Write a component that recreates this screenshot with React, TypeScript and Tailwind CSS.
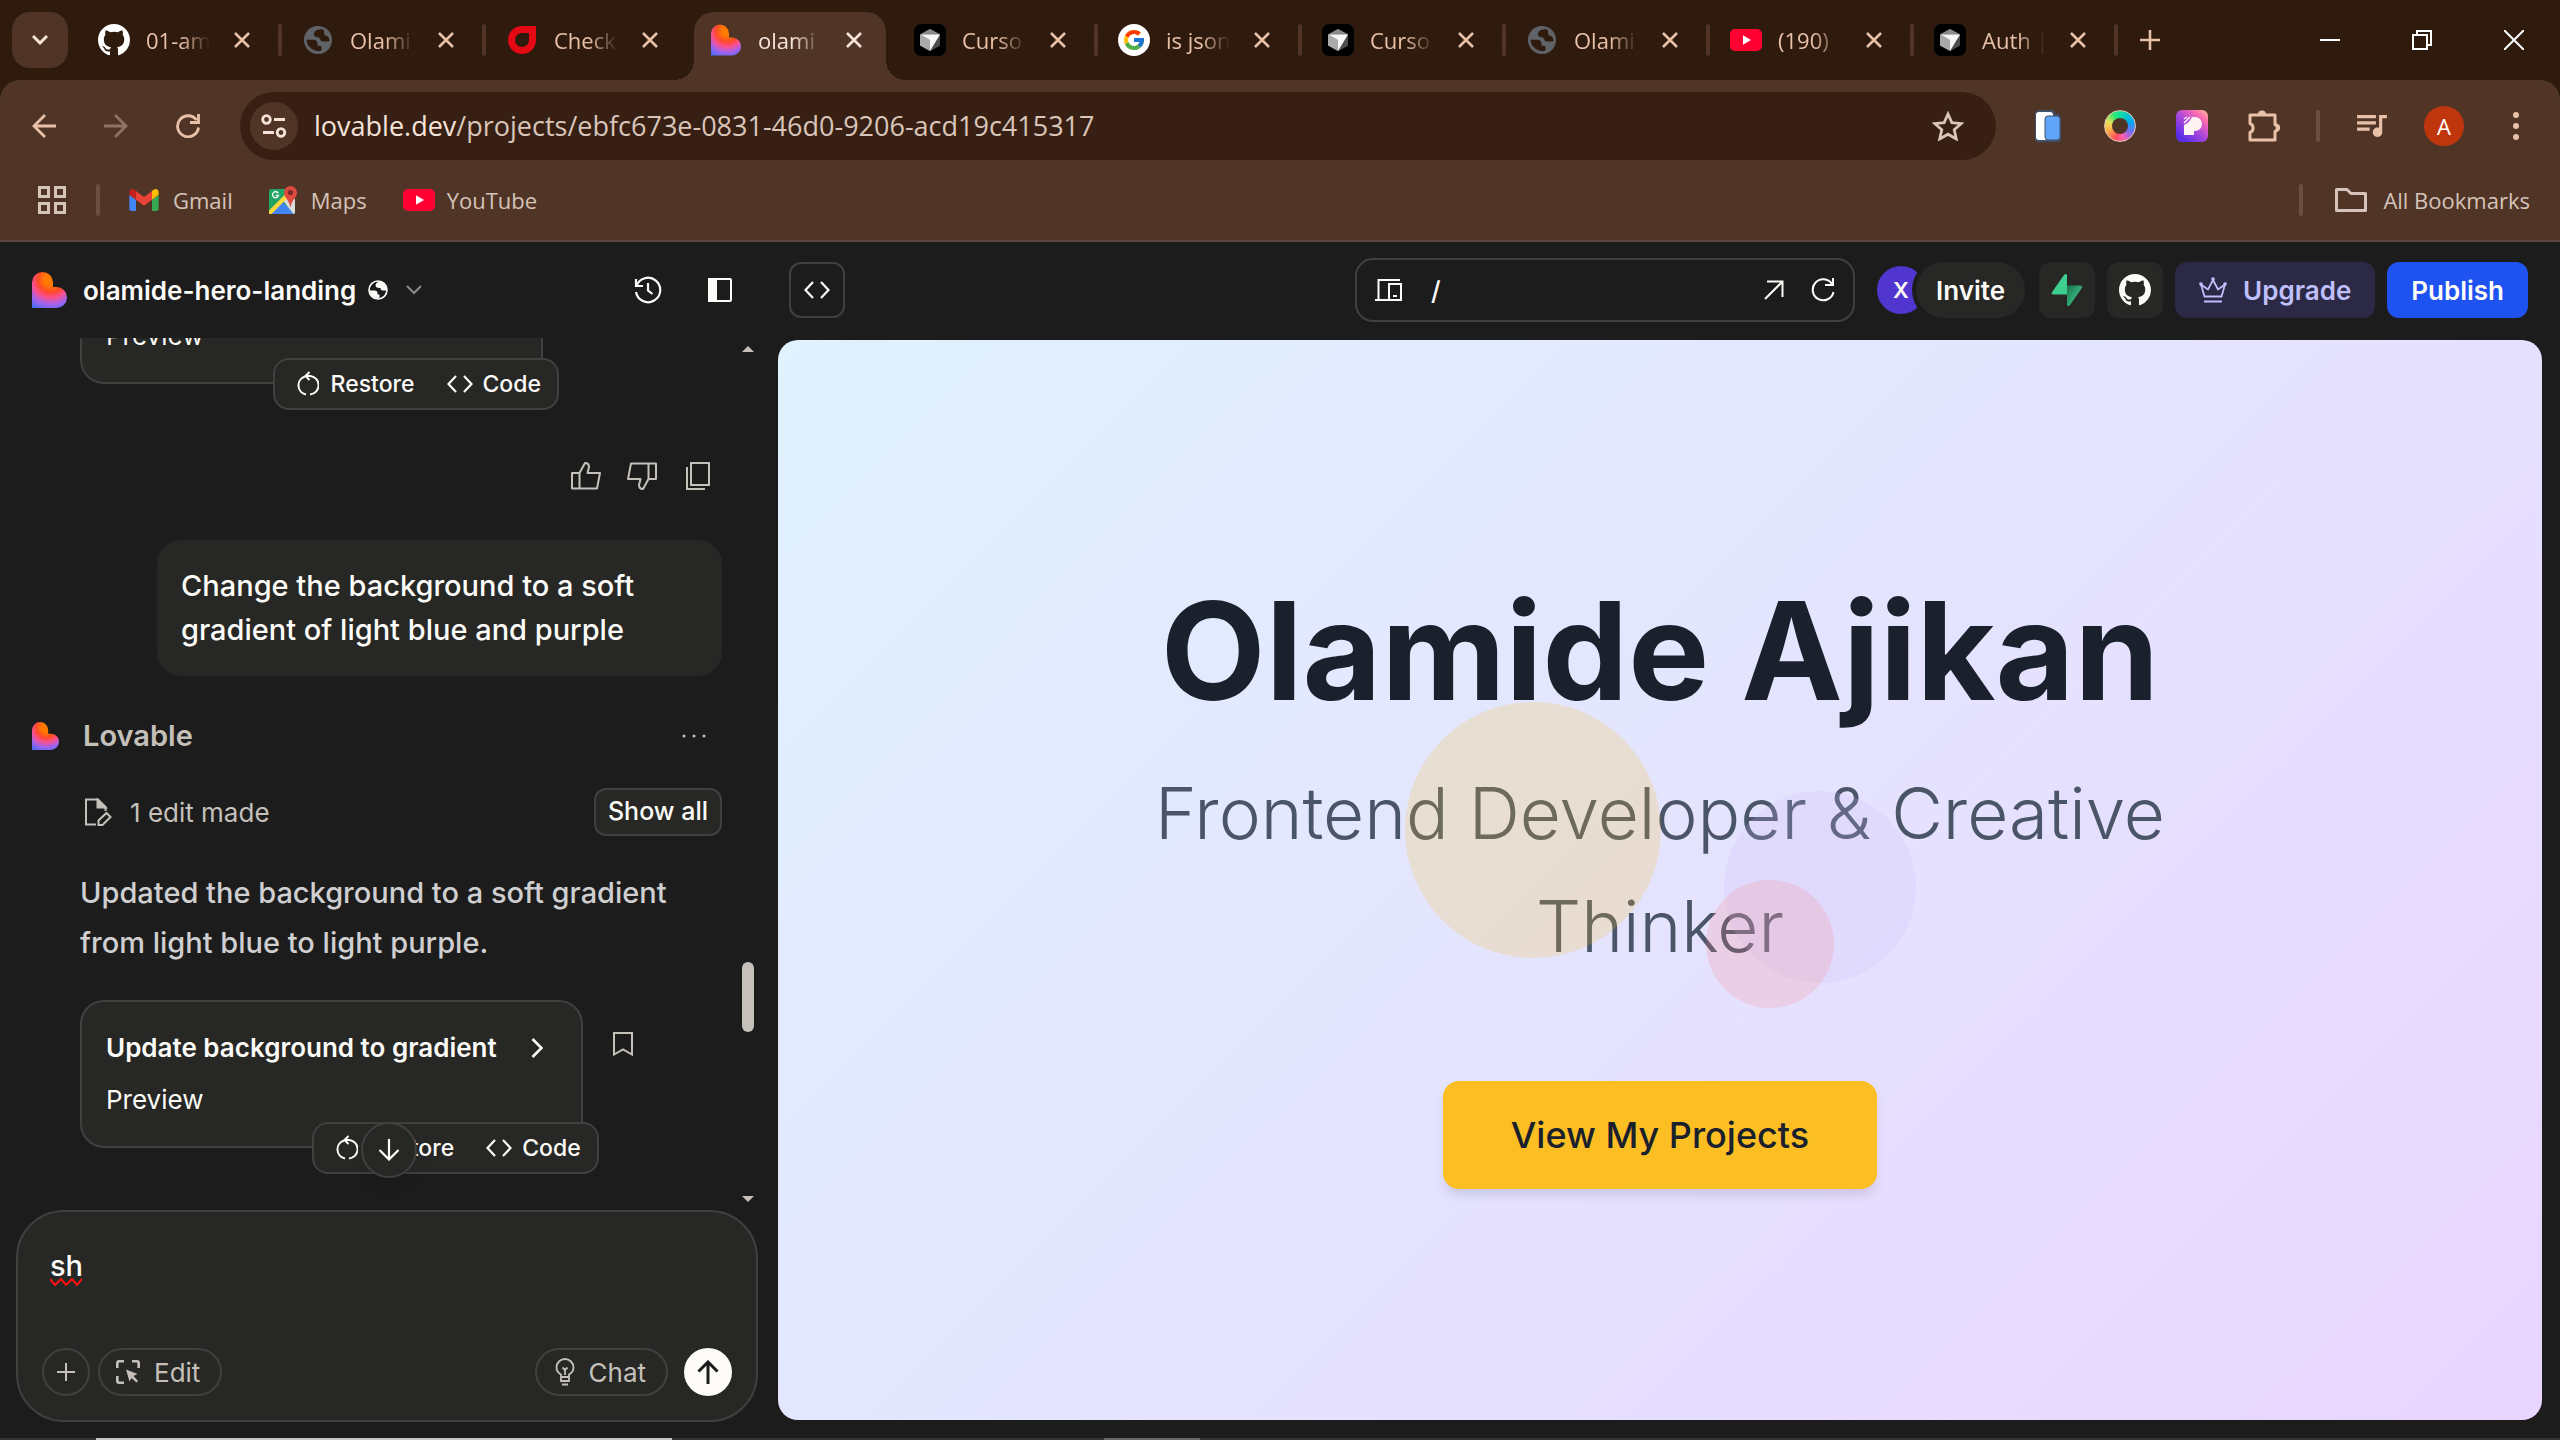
import React, { type ReactNode } from "react";
import { FcGoogle } from "react-icons/fc";

type IconProps = { className?: string };

function GithubMark({ className }: IconProps) {
  return (
    <svg viewBox="0 0 16 16" fill="currentColor" className={className} aria-hidden="true">
      <path d="M8 0C3.58 0 0 3.58 0 8c0 3.54 2.29 6.53 5.47 7.59.4.07.55-.17.55-.38 0-.19-.01-.82-.01-1.49-2.01.37-2.53-.49-2.69-.94-.09-.23-.48-.94-.82-1.13-.28-.15-.68-.52-.01-.53.63-.01 1.08.58 1.23.82.72 1.21 1.87.87 2.33.66.07-.52.28-.87.51-1.07-1.78-.2-3.64-.89-3.64-3.95 0-.87.31-1.59.82-2.15-.08-.2-.36-1.02.08-2.12 0 0 .67-.21 2.2.82.64-.18 1.32-.27 2-.27.68 0 1.36.09 2 .27 1.53-1.04 2.2-.82 2.2-.82.44 1.1.16 1.92.08 2.12.51.56.82 1.27.82 2.15 0 3.07-1.87 3.75-3.65 3.95.29.25.54.73.54 1.48 0 1.07-.01 1.93-.01 2.2 0 .21.15.46.55.38A8.013 8.013 0 0 0 16 8c0-4.42-3.58-8-8-8z" />
    </svg>
  );
}

function LovableMark({ className, id }: IconProps & { id: string }) {
  return (
    <svg viewBox="0 0 35 36" className={className} aria-hidden="true">
      <defs>
        <radialGradient id={id} gradientUnits="userSpaceOnUse" cx="19" cy="7" r="33">
          <stop offset="0.2" stopColor="#ff7a00" />
          <stop offset="0.4" stopColor="#ff4a2b" />
          <stop offset="0.57" stopColor="#f9508f" />
          <stop offset="0.76" stopColor="#a862ea" />
          <stop offset="1" stopColor="#4a6cf5" />
        </radialGradient>
      </defs>
      <path d="M0 36V10.500a10.500 10.500 0 0 1 21 0V15h3.500a10.500 10.500 0 0 1 0 21Z" fill={`url(#${id})`} />
    </svg>
  );
}

function GlobeFavicon({ className }: IconProps) {
  return (
    <svg viewBox="0 0 28 28" className={className} aria-hidden="true">
      <circle cx="14" cy="14" r="14" fill="#5f6368" />
      <path d="M2.600 13.800H9q4.500 0 4.500 4.200v1.800h2.500q1.500 0 1.500 1.800v3q-5 1.800-9.500-1.500Q2.600 19.500 2.600 13.800Z" fill="#2e1b0e" />
      <path d="M10 7.500q.3-2.500 3-3.500 3.800-1.700 7 0v2.500q0 3 2.800 3.500 2.400.7 2.600 4.500-.8 1.500-2.400 1h-3.500q-3 0-3.500-2.500-.6-2-3-2Q10 11 10 7.500Z" fill="#2e1b0e" />
    </svg>
  );
}

function CheckFavicon({ className }: IconProps) {
  return (
    <svg viewBox="0 0 28 28" className={className} aria-hidden="true">
      <path
        d="M14 0h14v14a14 14 0 1 1-14-14Zm0 7a7 7 0 1 0 7 7V7Z"
        fill="#e50914"
        fillRule="evenodd"
      />
    </svg>
  );
}

function CursorFavicon({ className }: IconProps) {
  return (
    <svg viewBox="0 0 32 32" className={className} aria-hidden="true">
      <rect width="32" height="32" rx="7" fill="#000" />
      <path d="M16 5l10 5.500v11L16 27 6 21.500v-11Z" fill="#6b6b6b" />
      <path d="M16 5l10 5.500H6Z" fill="#8b8b8b" />
      <path d="M6 10.500l10 5.500v11L6 21.500Z" fill="#a9a9a9" />
      <path d="M26 10.500v11L16 27Z" fill="#4c4c4c" />
      <path d="M6.500 10.500h19.500L16 27V16Z" fill="#f7f7f7" />
    </svg>
  );
}

function GoogleFavicon() {
  return (
    <span className="flex size-8 items-center justify-center rounded-full bg-white">
      <FcGoogle className="size-6" />
    </span>
  );
}

function YouTubeMark({ className }: IconProps) {
  return (
    <svg viewBox="0 0 32 22" className={className} aria-hidden="true">
      <rect width="32" height="22" rx="5" fill="#ff0033" />
      <path d="M13 6.200v9.600l8-4.800Z" fill="#fff" />
    </svg>
  );
}

function GmailMark({ className }: IconProps) {
  return (
    <svg viewBox="52 42 88 66" className={className} aria-hidden="true">
      <path fill="#4285f4" d="M58 108h14V74L52 59v43c0 3.320 2.690 6 6 6" />
      <path fill="#34a853" d="M120 108h14c3.320 0 6-2.690 6-6V59l-20 15" />
      <path fill="#fbbc04" d="M120 48v26l20-15v-8c0-7.420-8.470-11.650-14.400-7.200" />
      <path fill="#ea4335" d="M72 74V48l24 18 24-18v26L96 92" />
      <path fill="#c5221f" d="M52 51v8l20 15V48l-5.600-4.200c-5.940-4.450-14.400-.22-14.400 7.200" />
    </svg>
  );
}

function MapsMark({ className }: IconProps) {
  return (
    <svg viewBox="0 0 28 28" className={className} aria-hidden="true">
      <rect y="3" width="26" height="25" rx="2" fill="#1fa463" />
      <path d="M13 15.500L25.500 28H1Z" fill="#4285f4" />
      <path d="M14 14.500l6-6 6 5V26q0 2-1.500 2Z" fill="#dcdcdc" />
      <path d="M0 24.500L18.500 6l3 3L2.500 28H1q-1 0-1-1Z" fill="#fdd73b" />
      <path d="M21.500 0a6.500 6.500 0 0 1 6.500 6.500c0 5-4.700 6.500-6.500 15-1.800-8.500-6.500-10-6.500-15A6.500 6.500 0 0 1 21.500 0Z" fill="#dd4b3e" />
      <circle cx="21.500" cy="6.500" r="2.600" fill="#7d2a22" />
      <path d="M9.200 7.300a3 3 0 1 0 .3 2H6.700" fill="none" stroke="#fff" strokeWidth="1.300" />
    </svg>
  );
}

function CodeIcon({ className }: IconProps) {
  return (
    <svg viewBox="0 0 26 20" fill="none" stroke="currentColor" strokeWidth="2.200" className={className} aria-hidden="true">
      <path d="M9 2L1.500 10 9 18M17 2l7.500 8L17 18" />
    </svg>
  );
}

function RestoreIcon({ className }: IconProps) {
  return (
    <svg viewBox="0 0 22 26" fill="none" stroke="currentColor" strokeWidth="2" className={className} aria-hidden="true">
      <path d="M8 5.500A9.300 9.300 0 0 0 9 23.500M13 23.500A9.300 9.300 0 0 0 13.500 5H9" />
      <path d="M12.500 1L8.500 5l4 4" />
    </svg>
  );
}

function ThumbIcon({ className }: IconProps) {
  return (
    <svg viewBox="0 0 32 30" fill="none" stroke="currentColor" strokeWidth="2" strokeLinejoin="round" className={className} aria-hidden="true">
      <path d="M2 12h7.500L15 2q4 0 4 4l-1.500 6H30l-3 15.500H2ZM9.500 12v15.500" />
    </svg>
  );
}

function ChromeBtn({ label, className, children }: { label: string; className?: string; children: ReactNode }) {
  return (
    <button type="button" aria-label={label} className={`flex shrink-0 items-center justify-center ${className ?? ""}`}>
      {children}
    </button>
  );
}

function CloseX({ className }: IconProps) {
  return (
    <svg viewBox="0 0 16 16" stroke="currentColor" strokeWidth="2.600" className={className} aria-hidden="true">
      <path d="M1 1l14 14M15 1L1 15" />
    </svg>
  );
}

type TabData = { title: string; icon: ReactNode; active?: boolean; separator?: boolean };

const tabs: TabData[] = [
  { title: "01-am", icon: <GithubMark className="size-8 text-white" />, separator: true },
  { title: "Olami", icon: <GlobeFavicon className="size-7" />, separator: true },
  { title: "Check", icon: <CheckFavicon className="size-7" /> },
  { title: "olami", icon: <LovableMark id="tab-logo" className="h-8 w-[30px]" />, active: true },
  { title: "Curso", icon: <CursorFavicon className="size-8" />, separator: true },
  { title: "is json", icon: <GoogleFavicon />, separator: true },
  { title: "Curso", icon: <CursorFavicon className="size-8" />, separator: true },
  { title: "Olami", icon: <GlobeFavicon className="size-7" />, separator: true },
  { title: "(190)", icon: <YouTubeMark className="h-[22px] w-8" />, separator: true },
  { title: "Auth |", icon: <CursorFavicon className="size-8" />, separator: true },
];

function Tab({ title, icon, active, separator }: TabData) {
  return (
    <div className="relative flex w-[204px] shrink-0 items-center pl-5">
      {active && (
        <div className="absolute inset-y-0 -left-4 right-0 pt-3">
          <div className="mr-2 ml-5 h-full rounded-t-[20px] bg-[#503526]" />
          <div className="absolute bottom-0 left-0 size-5 bg-[radial-gradient(circle_at_0_0,#2e1b0e_20px,#503526_20px)]" />
          <div className="absolute -right-3 bottom-0 size-5 bg-[radial-gradient(circle_at_100%_0,#2e1b0e_20px,#503526_20px)]" />
        </div>
      )}
      <div className="relative flex w-8 justify-center">{icon}</div>
      <span
        className={`relative ml-4 w-16 overflow-hidden text-[22px] leading-8 whitespace-nowrap [mask-image:linear-gradient(to_right,#000_55%,transparent)] ${
          active ? "text-[#f6e3da]" : "text-[#e9c1a9]"
        }`}
      >
        {title}
      </span>
      <ChromeBtn label={`Close ${title}`} className={`relative ml-5 size-6 ${active ? "text-[#f6e3da]" : "text-[#e9c1a9]"}`}>
        <CloseX className="size-4" />
      </ChromeBtn>
      {separator && <div className="ml-auto h-8 w-1 rounded-full bg-[#503526]" />}
    </div>
  );
}

function TabStrip() {
  return (
    <div className="flex h-20 bg-[#2e1b0e]">
      <ChromeBtn label="Search tabs" className="mt-3 mr-[10px] ml-3 size-14 rounded-[18px] bg-[#503526] text-[#f6e3da]">
        <svg viewBox="0 0 16 10" fill="none" stroke="currentColor" strokeWidth="3" className="h-[10px] w-4">
          <path d="M1 1l7 7 7-7" />
        </svg>
      </ChromeBtn>
      {tabs.map((t, i) => (
        <Tab key={i} {...t} />
      ))}
      <ChromeBtn label="New tab" className="ml-[14px] w-9 text-[#e9c1a9]">
        <svg viewBox="0 0 20 20" stroke="currentColor" strokeWidth="2.600" className="size-5">
          <path d="M10 0v20M0 10h20" />
        </svg>
      </ChromeBtn>
      <div className="ml-auto flex text-white">
        <ChromeBtn label="Minimize" className="w-[92px]">
          <svg viewBox="0 0 20 20" stroke="currentColor" strokeWidth="2" className="size-5">
            <path d="M0 10h20" />
          </svg>
        </ChromeBtn>
        <ChromeBtn label="Restore window" className="w-[92px]">
          <svg viewBox="0 0 20 20" fill="none" stroke="currentColor" strokeWidth="2" className="size-5">
            <path d="M1 5h14v14H1ZM5 5V1h14v14h-4" />
          </svg>
        </ChromeBtn>
        <ChromeBtn label="Close window" className="w-[92px]">
          <svg viewBox="0 0 20 20" stroke="currentColor" strokeWidth="2" className="size-5">
            <path d="M0 0l20 20M20 0L0 20" />
          </svg>
        </ChromeBtn>
      </div>
    </div>
  );
}

function ArrowLeft({ className }: IconProps) {
  return (
    <svg viewBox="0 0 24 24" fill="none" stroke="currentColor" strokeWidth="2.800" className={className} aria-hidden="true">
      <path d="M24 12H2M13 1L2 12l11 11" />
    </svg>
  );
}

function Toolbar() {
  return (
    <div className="flex h-[92px] items-center text-[#e9c1a9]">
      <ChromeBtn label="Back" className="ml-5 size-12">
        <ArrowLeft className="size-6" />
      </ChromeBtn>
      <ChromeBtn label="Forward" className="ml-6 size-12 text-[#8f7262]">
        <ArrowLeft className="size-6 rotate-180" />
      </ChromeBtn>
      <ChromeBtn label="Reload" className="ml-6 size-12">
        <svg viewBox="0 0 24 24" fill="none" stroke="currentColor" strokeWidth="2.800" className="size-6">
          <path d="M20.500 6A10.500 10.500 0 1 0 22.500 13.500M22.500 0v8.500H14" />
        </svg>
      </ChromeBtn>
      <div className="ml-7 flex h-[68px] flex-1 items-center rounded-full bg-[#372013] pl-[10px]">
        <ChromeBtn label="View site information" className="size-12 rounded-full bg-[#503526] text-[#f6e3da]">
          <svg viewBox="0 0 26 24" fill="none" stroke="currentColor" strokeWidth="2.800" className="h-6 w-[26px]">
            <circle cx="5.500" cy="5.500" r="3.800" />
            <circle cx="20" cy="18.500" r="3.800" />
            <path d="M13 5.500h11M2 18.500h11" />
          </svg>
        </ChromeBtn>
        <div className="ml-4 flex-1 text-[27px] leading-9 text-[#d9c5ba]">
          <span className="text-[#f6e3da]">lovable.dev</span>/projects/ebfc673e-0831-46d0-9206-acd19c415317
        </div>
        <ChromeBtn label="Bookmark this tab" className="mr-6 size-12 text-[#d9c5ba]">
          <svg viewBox="0 0 32 30" fill="none" stroke="currentColor" strokeWidth="2.800" className="h-[30px] w-8">
            <path d="M16 3l3.900 8.700 9.400.9-7.100 6.200 2.100 9.200L16 23.200 7.700 28l2.100-9.200-7.100-6.200 9.400-.9Z" />
          </svg>
        </ChromeBtn>
      </div>
      <ChromeBtn label="Mobile simulator" className="ml-7 size-12">
        <svg viewBox="0 0 26 32" className="h-8 w-[26px]">
          <path d="M3 0h15l2 4h4l2 4v22l-2 2H2L0 30V3Z" fill="#40506b" />
          <rect x="1" y="2" width="17" height="28" rx="3" fill="#fff" />
          <rect x="10" y="6" width="15" height="24" rx="3" fill="#60a5fa" stroke="#40506b" />
        </svg>
      </ChromeBtn>
      <ChromeBtn label="Colour picker" className="ml-6 size-12">
        <span className="flex size-8 items-center justify-center rounded-full border border-[#e6c9b6] bg-[conic-gradient(#10e0a0,#00a8f5_70deg,#7a6cf0_120deg,#ff5fae_165deg,#ff4f5a_200deg,#ffb04a_250deg,#e6e05a_290deg,#30e870_330deg,#10e0a0)]">
          <span className="size-4 rounded-full bg-[#503526]" />
        </span>
      </ChromeBtn>
      <ChromeBtn label="Pesticide" className="ml-6 size-12">
        <svg viewBox="0 0 32 32" className="size-8">
          <defs>
            <linearGradient id="ext-p" x1="0.200" y1="0.900" x2="1" y2="0">
              <stop offset="0" stopColor="#5a2ee8" />
              <stop offset="0.450" stopColor="#b44ad8" />
              <stop offset="0.750" stopColor="#ff6cb0" />
              <stop offset="1" stopColor="#ffc0a0" />
            </linearGradient>
          </defs>
          <rect width="32" height="32" rx="6" fill="url(#ext-p)" />
          <path d="M8 25V15q6-3 8-8h3a7 7 0 0 1 0 14h-1v4Z" fill="#fff3f3" />
          <path d="M8 9l3-2M8 13l6-6" stroke="#fff3f3" strokeWidth="1.500" />
        </svg>
      </ChromeBtn>
      <ChromeBtn label="Extensions" className="ml-6 size-12">
        <svg viewBox="0 0 32 32" className="size-8">
          <path d="M2 5h25v9.500a3.800 3.800 0 0 1 0 7V30H2v-7.500a4.800 4.800 0 0 0 0-9Z" fill="none" stroke="currentColor" strokeWidth="3" strokeLinejoin="round" />
          <path d="M10 4.500a4 4 0 0 1 8 0ZM28 13.500a4.200 4.200 0 0 1 0 8.500Z" fill="currentColor" />
        </svg>
      </ChromeBtn>
      <div className="ml-7 h-8 w-1 rounded-full bg-[#6c4e3e]" />
      <ChromeBtn label="Media controls" className="ml-7 size-12">
        <svg viewBox="3 6 19 14" fill="currentColor" className="h-[22px] w-[30px]">
          <path d="M15 6H3v2h12V6zm0 4H3v2h12v-2zM3 16h8v-2H3v2zM17 6v8.180c-.31-.11-.65-.18-1-.18-1.660 0-3 1.340-3 3s1.340 3 3 3 3-1.340 3-3V8h3V6h-5z" />
        </svg>
      </ChromeBtn>
      <ChromeBtn label="Profile" className="ml-7 size-10 rounded-full bg-[#bf360c] text-[22px] text-white">
        A
      </ChromeBtn>
      <ChromeBtn label="Menu" className="mr-5 ml-7 size-12">
        <svg viewBox="0 0 6 28" fill="currentColor" className="h-7 w-[6px]">
          <circle cx="3" cy="3" r="3" />
          <circle cx="3" cy="14" r="3" />
          <circle cx="3" cy="25" r="3" />
        </svg>
      </ChromeBtn>
    </div>
  );
}

function BookmarksBar() {
  return (
    <nav className="mb-3 flex h-14 items-center text-[22px] leading-7 text-[#d6c3b9]">
      <ChromeBtn label="Apps" className="ml-[38px]">
        <svg viewBox="0 0 28 28" fill="none" stroke="currentColor" strokeWidth="3" className="size-7">
          <path d="M1.500 1.500h9v9h-9ZM17.500 1.500h9v9h-9ZM1.500 17.500h9v9h-9ZM17.500 17.500h9v9h-9Z" />
        </svg>
      </ChromeBtn>
      <div className="ml-[30px] h-8 w-1 rounded-full bg-[#6c4e3e]" />
      <a href="#gmail" className="ml-[29px] flex items-center gap-[14px]">
        <GmailMark className="h-[22px] w-[30px]" />
        Gmail
      </a>
      <a href="#maps" className="ml-9 flex items-center gap-[14px]">
        <MapsMark className="size-7" />
        Maps
      </a>
      <a href="#youtube" className="ml-9 flex items-center gap-3">
        <YouTubeMark className="h-[22px] w-8" />
        YouTube
      </a>
      <div className="ml-auto h-8 w-1 rounded-full bg-[#6c4e3e]" />
      <button type="button" className="mr-[30px] ml-8 flex items-center gap-4">
        <svg viewBox="0 0 32 24" fill="none" stroke="currentColor" strokeWidth="3" strokeLinejoin="round" className="h-6 w-8">
          <path d="M1.500 1.500h10.500l4 4h14.500v17h-29Z" />
        </svg>
        All Bookmarks
      </button>
    </nav>
  );
}

function ProjectHeader() {
  return (
    <header className="flex h-24 items-center pr-9 pl-8">
      <LovableMark id="header-logo" className="h-9 w-[35px]" />
      <button type="button" className="ml-4 flex items-center text-[26px] font-semibold text-[#fcfbf8]">
        olamide-hero-landing
        <svg viewBox="0 0 20 20" className="ml-3 size-5">
          <circle cx="10" cy="10" r="9" fill="none" stroke="currentColor" strokeWidth="1.600" />
          <path d="M1.500 10.500h5q3 0 3 2.500v1.500h2v3.500q-9 1-10-7.500ZM7.500 5q1-3.500 5-3.500 3 .5 4.500 3 2 2.500 1.500 6h-3.500q-2.500 0-2.500-2.500-5 .5-5-3Z" fill="currentColor" />
        </svg>
        <svg viewBox="0 0 16 10" fill="none" stroke="#8d8c88" strokeWidth="2" className="ml-[18px] h-[10px] w-4">
          <path d="M1 1l7 7 7-7" />
        </svg>
      </button>
      <ChromeBtn label="History" className="ml-auto size-11 text-[#fcfbf8]">
        <svg viewBox="0 0 28 28" fill="none" stroke="currentColor" strokeWidth="2.200" className="size-7">
          <path d="M2.500 10A12.200 12.200 0 1 1 2 16M2 3v7h7M14 7v7.500l4.500 3.500" />
        </svg>
      </ChromeBtn>
      <ChromeBtn label="Toggle sidebar" className="ml-7 size-11 text-[#fcfbf8]">
        <svg viewBox="0 0 24 24" className="size-6">
          <rect x="1" y="1" width="22" height="22" rx="1" fill="none" stroke="currentColor" strokeWidth="2" />
          <path d="M0 0h9v24H0Z" fill="currentColor" />
        </svg>
      </ChromeBtn>
    </header>
  );
}

function CardActions() {
  return (
    <div className="absolute -right-[18px] -bottom-7 flex h-[52px] items-center rounded-2xl border-2 border-[#40403f] bg-[#272725] pr-4 pl-[22px] text-[23px] font-medium">
      <button type="button" className="flex items-center">
        <RestoreIcon className="mr-3 h-[26px] w-[22px]" />
        Restore
      </button>
      <button type="button" className="ml-8 flex items-center">
        <CodeIcon className="mr-[10px] h-5 w-[26px]" />
        Code
      </button>
    </div>
  );
}

function ChatThread() {
  return (
    <div className="relative flex min-h-0 flex-1 flex-col justify-end overflow-hidden">
      <div className="pr-14 pb-[62px] pl-8">
        <div className="relative ml-12 w-[463px] rounded-b-3xl border-2 border-t-0 border-[#40403f] bg-[#272725] px-6 pb-[30px] text-[26px] leading-8 text-[#fcfbf8]">
          <p>Preview</p>
          <CardActions />
        </div>
        <div className="mt-[76px] mr-2 flex justify-end gap-6 text-[#c5c1ba]">
          <ChromeBtn label="Good response" className="size-8">
            <ThumbIcon className="h-[30px] w-8" />
          </ChromeBtn>
          <ChromeBtn label="Bad response" className="size-8">
            <ThumbIcon className="h-[30px] w-8 rotate-180" />
          </ChromeBtn>
          <ChromeBtn label="Copy response" className="size-8">
            <svg viewBox="0 0 24 28" fill="none" stroke="currentColor" strokeWidth="2" className="h-7 w-6">
              <path d="M5 1h18v22H5ZM1 5v22h18" />
            </svg>
          </ChromeBtn>
        </div>
        <p className="mt-12 ml-[125px] rounded-3xl bg-[#272725] p-6 text-[29px] leading-[44px] font-medium text-[#fcfbf8]">
          Change the background to a soft gradient of light blue and purple
        </p>
        <div className="mt-10 flex h-10 items-center text-[#c5c1ba]">
          <LovableMark id="chat-logo" className="h-7 w-[27px]" />
          <span className="ml-6 text-[29px] font-semibold">Lovable</span>
          <ChromeBtn label="More options" className="mr-4 ml-auto">
            <svg viewBox="0 0 24 4" fill="currentColor" className="h-1 w-6">
              <circle cx="2" cy="2" r="1.500" />
              <circle cx="12" cy="2" r="1.500" />
              <circle cx="22" cy="2" r="1.500" />
            </svg>
          </ChromeBtn>
        </div>
        <div className="mt-8 ml-[52px] flex items-center text-[26px] text-[#c5c1ba]">
          <svg viewBox="0 0 28 28" fill="none" stroke="currentColor" strokeWidth="2" className="mr-[18px] size-7">
            <path d="M12 26.500H2V1.500h12L21.500 9v4" />
            <path d="M13.500 1.500V9.500h8Z" fill="currentColor" />
            <path d="M14.500 27v-4.500l8-7.500 4 4-8 8Z" />
          </svg>
          1 edit made
          <button
            type="button"
            className="ml-auto h-12 rounded-xl border-2 border-[#40403f] bg-[#272725] px-3 text-[25px] font-medium text-[#fcfbf8]"
          >
            Show all
          </button>
        </div>
        <p className="mt-8 mb-8 ml-12 text-[29px] leading-[50px] font-[450] text-[#cfcfd1]">
          Updated the background to a soft gradient from light blue to light purple.
        </p>
        <div className="ml-12 flex items-start">
          <div className="relative rounded-3xl border-2 border-[#40403f] bg-[#272725] px-6 py-[30px] text-[26px] leading-8 text-[#fcfbf8]">
            <a href="#edit" className="flex items-center pr-[14px] font-semibold">
              Update background to gradient
              <svg viewBox="0 0 12 20" fill="none" stroke="currentColor" strokeWidth="2.600" className="ml-[34px] h-5 w-3">
                <path d="M1.500 1l9 9-9 9" />
              </svg>
            </a>
            <p className="mt-5">Preview</p>
            <CardActions />
          </div>
          <button type="button" aria-label="Bookmark this edit" className="mt-8 ml-[30px] text-[#c5c1ba]">
            <svg viewBox="0 0 20 24" fill="none" stroke="currentColor" strokeWidth="2" className="h-6 w-5">
              <path d="M1 1h18v21.500l-9-5-9 5Z" />
            </svg>
          </button>
        </div>
      </div>
      <button
        type="button"
        aria-label="Scroll to bottom"
        className="absolute bottom-8 left-1/2 flex size-14 -translate-x-1/2 items-center justify-center rounded-full border-2 border-[#40403f] bg-[#272725] text-[#fcfbf8] shadow-lg"
      >
        <svg viewBox="0 0 22 22" fill="none" stroke="currentColor" strokeWidth="2.200" className="size-[22px]">
          <path d="M11 0v20M1.500 11l9.500 9.500 9.500-9.500" />
        </svg>
      </button>
      <div className="absolute inset-y-2 right-6 flex w-3 flex-col items-center text-[#c5c1ba]">
        <svg viewBox="0 0 12 6" fill="currentColor" className="w-3">
          <path d="M0 6l6-6 6 6Z" />
        </svg>
        <div className="mt-auto mb-[164px] h-[70px] w-3 rounded-full bg-[#c5c1ba]" />
        <svg viewBox="0 0 12 6" fill="currentColor" className="w-3">
          <path d="M0 0l6 6 6-6Z" />
        </svg>
      </div>
    </div>
  );
}

function Composer() {
  return (
    <form className="relative mr-5 mb-4 ml-4 rounded-[48px] border-2 border-[#40403f] bg-[#272725] px-6 pt-[34px] pb-6">
      <textarea
        aria-label="Message"
        defaultValue="sh"
        spellCheck={false}
        className="block h-[102px] w-full resize-none bg-transparent px-2 text-[29px] leading-10 font-medium text-[#fcfbf8] outline-none"
      />
      <svg viewBox="0 0 32 8" fill="none" stroke="#ff1010" strokeWidth="2" className="absolute top-[66px] left-8 h-2 w-8">
        <path d="M0 1l5 6 6-6 5 6 6-6 5 6 5-6" />
      </svg>
      <div className="flex items-center text-[26px] text-[#c5c1ba]">
        <button type="button" aria-label="Add attachment" className="flex size-12 items-center justify-center rounded-full border-2 border-[#40403f]">
          <svg viewBox="0 0 18 18" stroke="currentColor" strokeWidth="2" className="size-[18px]">
            <path d="M9 0v18M0 9h18" />
          </svg>
        </button>
        <button type="button" className="ml-2 flex h-12 items-center rounded-full border-2 border-[#40403f] pr-5 pl-4">
          <svg viewBox="0 0 24 24" fill="none" stroke="currentColor" strokeWidth="2.600" className="mr-[14px] size-6">
            <path d="M1.300 8V3q0-1.700 1.700-1.700h5M16 1.300h5q1.700 0 1.700 1.700v5M1.300 16v5q0 1.700 1.700 1.700h5" />
            <path d="M10 9.500l11.500 4.500-4 2 4.500 5-1.500 1.500-5-4.500-2 3.500Z" fill="currentColor" stroke="none" />
          </svg>
          Edit
        </button>
        <button type="button" className="mr-4 ml-auto flex h-12 items-center rounded-full border-2 border-[#40403f] pr-5 pl-4">
          <svg viewBox="0 0 24 28" fill="none" stroke="currentColor" strokeWidth="1.800" className="mr-3 h-7 w-6">
            <path d="M8 19v-2.500q-4.500-2.500-4.500-7a8.500 8.500 0 0 1 17 0q0 4.500-4.500 7V19ZM8 19v4h8v-4M9 26.500h6M12 17v-5M9.500 9.500l2.500 2.500 2.500-2.500" />
          </svg>
          Chat
        </button>
        <button type="submit" aria-label="Send" className="flex size-12 items-center justify-center rounded-full bg-[#fcfbf8] text-[#1c1c1c]">
          <svg viewBox="0 0 22 24" fill="none" stroke="currentColor" strokeWidth="3" className="h-6 w-[22px]">
            <path d="M11 24V2M1.500 11.500L11 2l9.500 9.500" />
          </svg>
        </button>
      </div>
    </form>
  );
}

function PreviewHeader() {
  return (
    <header className="flex h-24 items-center pr-8 pl-[11px] text-[#fcfbf8]">
      <ChromeBtn label="Code view" className="size-14 rounded-xl border-2 border-[#40403f]">
        <CodeIcon className="h-5 w-[26px]" />
      </ChromeBtn>
      <div className="mr-[22px] ml-auto flex h-16 w-[500px] items-center rounded-[18px] border-2 border-[#40403f] px-[18px]">
        <svg viewBox="0 0 28 24" fill="none" stroke="currentColor" strokeWidth="2" className="h-6 w-7">
          <path d="M3.500 22V2H25M0 22h13M14 6h12v16H14ZM18 18h4" />
        </svg>
        <input aria-label="Preview path" defaultValue="/" className="ml-[28px] min-w-0 flex-1 bg-transparent text-[26px] font-medium outline-none" />
        <svg viewBox="0 0 20 20" fill="none" stroke="currentColor" strokeWidth="2" className="size-5">
          <path d="M1 19L18 2M3 1.500h15.500V17" />
        </svg>
        <svg viewBox="0 0 24 24" fill="none" stroke="currentColor" strokeWidth="2" className="ml-[27px] size-6">
          <path d="M21 6A10.500 10.500 0 1 0 22.500 14M22 0v7h-8" />
        </svg>
      </div>
      <span className="flex size-12 items-center justify-center rounded-full bg-[#5036cf] text-[22px] font-semibold">X</span>
      <button type="button" className="-ml-[9px] h-14 rounded-full bg-[#272725] px-5 text-[26px] font-semibold shadow-[0_0_0_4px_#1c1c1c]">
        Invite
      </button>
      <ChromeBtn label="Supabase" className="ml-[14px] size-14 rounded-xl bg-[#272725]">
        <svg viewBox="0 0 32 32" className="size-8">
          <defs>
            <linearGradient id="bolt" x1="0.100" y1="0.100" x2="0.600" y2="0.600">
              <stop offset="0" stopColor="#1f7a52" />
              <stop offset="1" stopColor="#34b27b" />
            </linearGradient>
          </defs>
          <path d="M16 11.500h13q3.500 0 1.500 3L19 31q-3 2.500-3-1Z" fill="url(#bolt)" />
          <path d="M16 20.500H3q-3.500 0-1.500-3L13 1q3-2.500 3 1Z" fill="#3ecf8e" />
        </svg>
      </ChromeBtn>
      <ChromeBtn label="GitHub" className="ml-3 size-14 rounded-xl bg-[#272725]">
        <GithubMark className="size-8" />
      </ChromeBtn>
      <button type="button" className="ml-3 flex h-14 items-center rounded-xl bg-[#2b2945] px-6 text-[26px] font-semibold text-[#bfbffc]">
        <svg viewBox="0 0 28 26" fill="none" stroke="currentColor" strokeWidth="1.800" className="mr-4 h-[26px] w-7">
          <path d="M2 7.500l3.500 12h17L26 7.500l-7 5-5-9.500-5 9.500ZM5 24.500h18" />
          <g fill="currentColor" stroke="none">
            <circle cx="2" cy="7" r="1.800" />
            <circle cx="14" cy="2" r="1.800" />
            <circle cx="26" cy="7" r="1.800" />
          </g>
        </svg>
        Upgrade
      </button>
      <button type="button" className="ml-3 h-14 rounded-xl bg-[#1e52f1] px-6 text-[26px] font-semibold">
        Publish
      </button>
    </header>
  );
}

function Hero() {
  return (
    <section className="relative mt-[2px] mr-[18px] mb-[18px] flex flex-1 flex-col items-center justify-center overflow-hidden rounded-[20px] bg-[linear-gradient(135deg,#e0f2fe,#e9d5ff)] pt-2 text-center">
      <h1 className="text-[136px] leading-[144px] font-bold text-[#1a202c]">Olamide Ajikan</h1>
      <p className="mt-[34px] max-w-6xl text-[71px] leading-[113px] font-light text-[#4a5568]">
        Frontend Developer &amp; Creative Thinker
      </p>
      <a
        href="#projects"
        className="mt-[98px] rounded-2xl bg-[#fbbf24] px-[68px] py-[30px] text-4xl leading-[48px] font-medium text-[#1a202c] shadow-[0_8px_12px_-2px_rgba(0,0,0,0.12)]"
      >
        View My Projects
      </a>
      <div className="absolute top-1/2 left-1/2 -mt-[178px] -ml-[255px] size-64 rounded-full bg-[#fbbf24]/20" />
      <div className="absolute top-1/2 left-1/2 -mt-[89px] ml-16 size-48 rounded-full bg-[#cdbdf8]/20" />
      <div className="absolute top-1/2 left-1/2 ml-[46px] size-32 rounded-full bg-[#fc8181]/20" />
    </section>
  );
}

export default function App() {
  return (
    <div className="flex h-screen flex-col bg-[#1c1c1c] font-['Inter',sans-serif]">
      <div className="shrink-0 bg-[#2e1b0e] font-['Open_Sans',sans-serif]">
        <TabStrip />
        <div className="rounded-t-[20px] border-b-2 border-[#5b4540] bg-[#503526]">
          <Toolbar />
          <BookmarksBar />
        </div>
      </div>
      <main className="flex min-h-0 flex-1">
        <div className="flex w-[778px] shrink-0 flex-col">
          <ProjectHeader />
          <ChatThread />
          <Composer />
        </div>
        <div className="flex min-w-0 flex-1 flex-col">
          <PreviewHeader />
          <Hero />
        </div>
      </main>
      <div className="flex h-[2px] shrink-0 bg-[#333231]">
        <div className="ml-24 w-[576px] bg-[#c4c4c4]" />
        <div className="ml-[432px] w-24 bg-[#666]" />
      </div>
    </div>
  );
}
